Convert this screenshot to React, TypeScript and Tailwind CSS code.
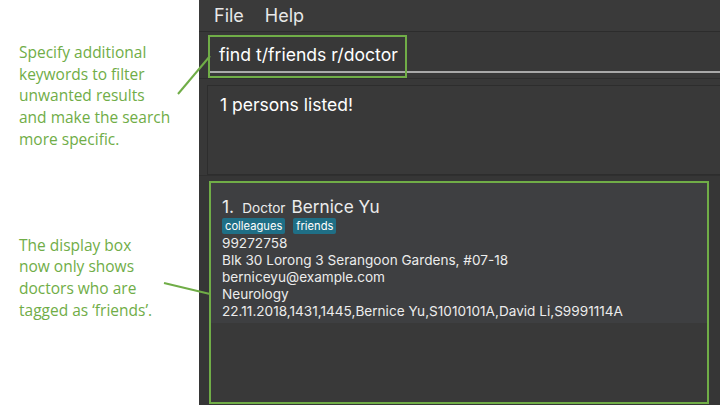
import React from "react";

const green = "#70ad47";

export default function App() {
  return (
    <div className="relative w-[720px] h-[405px] overflow-hidden flex bg-white" style={{ fontFamily: "Inter, 'Noto Sans', sans-serif" }}>
      {/* Left annotation column */}
      <div className="w-[199px] shrink-0 flex flex-col pl-[19px] text-[#70ad47] text-[15.5px] leading-[21.7px]" style={{ fontFamily: "'Open Sans', sans-serif" }}>
        <div className="mt-[42px]">
          Specify additional<br />keywords to filter<br />unwanted results<br />and make the search<br />more specific.
        </div>
        <div className="mt-[84px]">
          The display box<br />now only shows<br />doctors who are<br />tagged as ‘friends’.
        </div>
      </div>

      {/* Right app pane */}
      <div className="flex-1 flex flex-col bg-[#383838] text-[#e8e8e8]">
        {/* Menu bar */}
        <div className="h-[32px] flex items-center gap-[21px] pl-[15px] text-[18px] bg-[#3a3a3a] border-b border-[#2c2c2c]">
          <span>File</span>
          <span>Help</span>
        </div>
        {/* Command box */}
        <div className="h-[47px] pl-[9px] pt-[3px] border-b border-[#2e2e2e]">
          <div className="relative h-[38px] flex items-center pl-[11px] pt-[4px] border-b-2 border-[#a9a9a9] text-[17.6px] text-white">
            find t/friends r/doctor
            <div className="absolute left-0 top-0 w-[199px] h-[43px] border-2 border-[#70ad47]" />
          </div>
        </div>
        {/* Result display */}
        <div className="pt-[6px] pl-[8px]">
          <div className="h-[90px] bg-[#393939] border border-[#2d2d2d] border-r-0 pl-[12px] pt-[6px] text-[17.5px] text-white">
            1 persons listed!
          </div>
        </div>
        {/* Person list */}
        <div className="flex-1 flex pt-[5px] pl-[10px] bg-[#363636] border-t border-[#2f2f2f]">
          <div className="w-[500px] h-[223px] border-2 border-[#70ad47] bg-[#393939] flex flex-col">
            <div className="h-[140px] bg-[#3e3f41] pl-[11px] pt-[14px] text-[13.6px] leading-[17px] text-[#ececec]">
              <div className="flex items-baseline">
                <span className="text-[17.5px] mr-[8px]">1.</span>
                <span className="text-[13.6px] mr-[6px]">Doctor</span>
                <span className="text-[17.2px] leading-[20px]">Bernice Yu</span>
              </div>
              <div className="flex gap-[8px] mt-[1px] mb-[1px]">
                <span className="bg-[#1f6f86] rounded-[2px] px-[3px] h-[16px] leading-[16px] text-[11.2px] text-white">colleagues</span>
                <span className="bg-[#1f6f86] rounded-[2px] px-[3px] h-[16px] leading-[16px] text-[11.2px] text-white">friends</span>
              </div>
              <div>99272758</div>
              <div>Blk 30 Lorong 3 Serangoon Gardens, #07-18</div>
              <div>berniceyu@example.com</div>
              <div>Neurology</div>
              <div>22.11.2018,1431,1445,Bernice Yu,S1010101A,David Li,S9991114A</div>
            </div>
          </div>
        </div>
      </div>

      {/* Pointer lines */}
      <svg className="absolute inset-0 pointer-events-none" width="720" height="405">
        <line x1="178" y1="94" x2="210" y2="56" stroke={green} strokeWidth="2" />
        <line x1="164" y1="283" x2="210" y2="294" stroke={green} strokeWidth="2" />
      </svg>
    </div>
  );
}
